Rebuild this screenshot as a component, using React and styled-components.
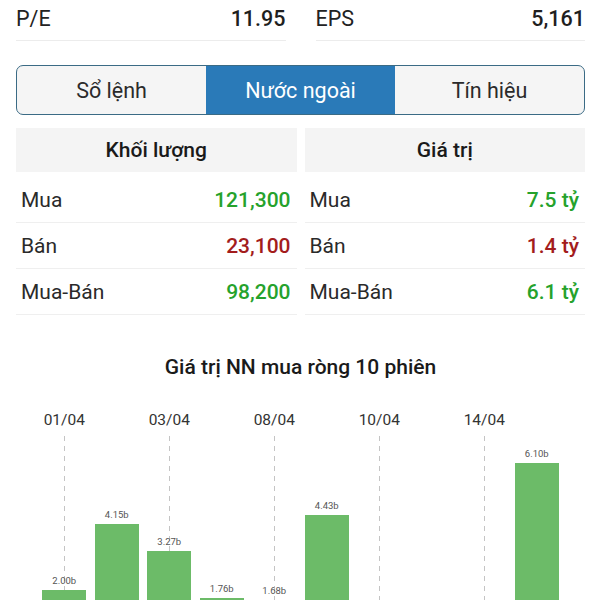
import React from "react";
import styled, { createGlobalStyle } from "styled-components";

const GlobalStyle = createGlobalStyle`
    body {
        margin: 0;
        background: #fff;
        font-family: Roboto, "Noto Sans", "Liberation Sans", sans-serif;
        color: #222;
    }
`;

const Page = styled.div`
    padding: 0 15px 0 16px;
`;

const StatsRow = styled.div`
    display: grid;
    grid-template-columns: 1fr 1fr;
    column-gap: 30px;
`;

const StatCell = styled.div`
    display: flex;
    justify-content: space-between;
    align-items: center;
    height: 36px;
    padding-bottom: 4px;
    border-bottom: 1px solid #ececec;
    font-size: 21.5px;
    span:last-child {
        color: #1f1f1f;
        font-weight: 500;
    }
`;

const Tabs = styled.div`
    box-sizing: border-box;
    display: grid;
    grid-template-columns: 1fr 1fr 1fr;
    margin-top: 24px;
    height: 50px;
    border: 1.5px solid #3b6b85;
    border-radius: 7px;
    overflow: hidden;
    background: #f5f5f5;
`;

const Tab = styled.div`
    display: flex;
    align-items: center;
    justify-content: center;
    font-size: 21.5px;
    color: ${p => (p.$active ? "#fff" : "#2b2b2b")};
    background: ${p => (p.$active ? "#2a7ab8" : "transparent")};
`;

const Panels = styled.div`
    display: grid;
    grid-template-columns: 1fr 1fr;
    column-gap: 8px;
    margin-top: 13px;
`;

const PanelHeader = styled.div`
    height: 44px;
    display: flex;
    align-items: center;
    justify-content: center;
    background: #f4f4f4;
    font-size: 21px;
    font-weight: 500;
    color: #1a1a1a;
    margin-bottom: 5px;
`;

const Row = styled.div`
    display: flex;
    justify-content: space-between;
    align-items: center;
    height: 45px;
    padding: 0 6px 0 5px;
    border-bottom: 1px solid #efefef;
    font-size: 21px;
    color: #2a2a2a;
`;

const Value = styled.span`
    font-weight: 500;
    color: ${p => (p.$tone === "down" ? "#a31c1c" : "#25a22c")};
`;

const ChartTitle = styled.div`
    margin-top: 39px;
    text-align: center;
    font-size: 21px;
    font-weight: 500;
    line-height: 26px;
    color: #1a1a1a;
`;

const Chart = styled.div`
    display: grid;
    grid-template-columns: repeat(10, 52.5px);
    margin: 30px 0 0 22px;
`;

const Column = styled.div`
    display: flex;
    flex-direction: column;
`;

const DateLabel = styled.div`
    height: 20px;
    line-height: 20px;
    text-align: center;
    font-size: 15.5px;
    color: #333;
    white-space: nowrap;
`;

const Plot = styled.div`
    margin-top: 6px;
    height: ${p => p.$h}px;
    display: flex;
    flex-direction: column;
    justify-content: ${p => (p.$neg ? "flex-start" : "flex-end")};
    align-items: center;
    background-image: ${p =>
        p.$grid
            ? "repeating-linear-gradient(to bottom, #c4c4c4 0 5px, transparent 5px 10px)"
            : "none"};
    background-size: 1px 100%;
    background-repeat: no-repeat;
    background-position: center top;
`;

const NegPlot = styled(Plot)`
    margin-top: 0;
`;

const Bar = styled.div`
    width: 44px;
    background: #6cbb68;
    flex: none;
`;

const BarLabel = styled.div`
    font-size: 9.5px;
    line-height: 11px;
    color: #555;
    margin-bottom: 4px;
`;

const SCALE = 30.96;
const POS_H = 216;

const sessions = [
    { date: "01/04", v: 2.0 },
    { v: 4.15 },
    { date: "03/04", v: 3.27 },
    { v: 1.76 },
    { date: "08/04", v: 1.68 },
    { v: 4.43 },
    { date: "10/04", v: -0.42 },
    { v: -1.15 },
    { date: "14/04", v: -0.64 },
    { v: 6.1 },
];

const volume = [
    { label: "Mua", value: "121,300", tone: "up" },
    { label: "Bán", value: "23,100", tone: "down" },
    { label: "Mua-Bán", value: "98,200", tone: "up" },
];

const amount = [
    { label: "Mua", value: "7.5 tỷ", tone: "up" },
    { label: "Bán", value: "1.4 tỷ", tone: "down" },
    { label: "Mua-Bán", value: "6.1 tỷ", tone: "up" },
];

const Panel = ({ title, rows }) => (
    <div>
        <PanelHeader>{title}</PanelHeader>
        {rows.map((r, idx) => (
            <Row key={idx}>
                <span>{r.label}</span>
                <Value $tone={r.tone}>{r.value}</Value>
            </Row>
        ))}
    </div>
);

export default function App() {
    return (
        <Page>
            <GlobalStyle />
            <StatsRow>
                <StatCell><span>P/E</span><span>11.95</span></StatCell>
                <StatCell><span>EPS</span><span>5,161</span></StatCell>
            </StatsRow>

            <Tabs>
                <Tab>Sổ lệnh</Tab>
                <Tab $active>Nước ngoài</Tab>
                <Tab>Tín hiệu</Tab>
            </Tabs>

            <Panels>
                <Panel title="Khối lượng" rows={volume} />
                <Panel title="Giá trị" rows={amount} />
            </Panels>

            <ChartTitle>Giá trị NN mua ròng 10 phiên</ChartTitle>
            <Chart>
                {sessions.map((s, idx) => (
                    <Column key={idx}>
                        <DateLabel>{s.date || ""}</DateLabel>
                        <Plot $h={POS_H} $grid={!!s.date}>
                            {s.v > 0 && (
                                <>
                                    <BarLabel>{s.v.toFixed(2)}b</BarLabel>
                                    <Bar style={{ height: s.v * SCALE }} />
                                </>
                            )}
                        </Plot>
                        <NegPlot $h={60} $neg $grid={!!s.date}>
                            {s.v < 0 && <Bar style={{ height: -s.v * SCALE }} />}
                        </NegPlot>
                    </Column>
                ))}
            </Chart>
        </Page>
    );
}
